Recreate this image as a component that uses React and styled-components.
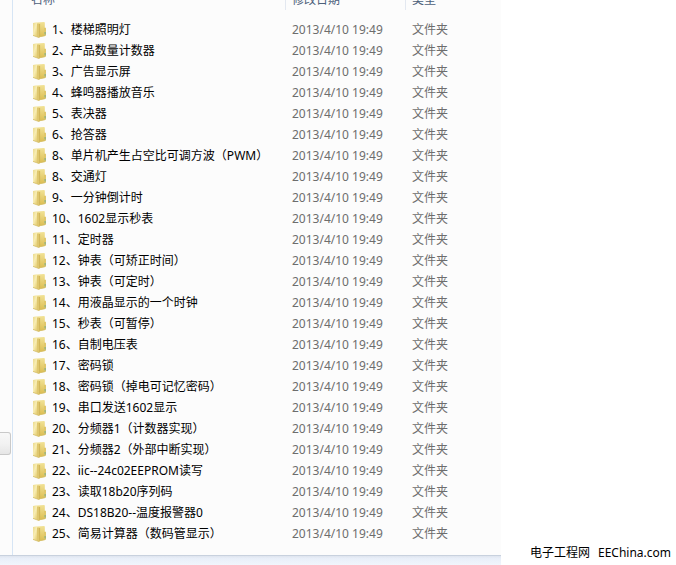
import React from "react";
import styled, { createGlobalStyle } from "styled-components";

const GlobalStyles = createGlobalStyle`
  body {
    margin: 0;
    background: #ffffff;
    font-family: "Noto Sans", "Noto Sans CJK SC", sans-serif;
    font-size: 12px;
    line-height: 21px;
    color: #000000;
  }
`;

const Page = styled.div`
  display: grid;
  grid-template-columns: minmax(0, 1fr) 175px;
  min-height: 100vh;
`;

const Explorer = styled.main`
  display: flex;
  flex-direction: column;
  background: #fcfcfc;
`;

const Panes = styled.div`
  display: flex;
  flex: 1;
`;

const NavPane = styled.div`
  display: flex;
  flex-direction: column;
  justify-content: flex-end;
  box-sizing: border-box;
  width: 13px;
  padding-bottom: 100px;
  border-right: 1px solid #d6e5f5;
`;

const ScrollThumb = styled.div`
  box-sizing: border-box;
  width: 11px;
  height: 23px;
  border: 1px solid #c9c9c9;
  border-left: none;
  border-radius: 0 3px 3px 0;
  background: linear-gradient(#f8f8f8, #f2f2f2 50%, #e6e6e6);
`;

const FilePane = styled.div`
  flex: 1;
  min-width: 0;
  padding-bottom: 11px;
`;

const Table = styled.table`
  width: 100%;
  table-layout: fixed;
  border-collapse: collapse;
`;

const Col = styled.col`
  width: ${(props) => props.$width};
`;

const HeadCell = styled.th`
  height: 19px;
  padding: 0;
  vertical-align: top;
  text-align: left;
  font-weight: normal;
  color: #4c607a;
`;

const HeadLabel = styled.div`
  display: flex;
  flex-direction: column;
  justify-content: flex-end;
  height: 10px;
  overflow: hidden;
  padding-left: ${(props) => (props.$first ? "17px" : "6px")};
  border-left: 1px solid ${(props) => (props.$first ? "transparent" : "#e3e8f0")};
`;

const Cell = styled.td`
  height: 21px;
  padding: 0 0 0 7px;
  white-space: nowrap;
  color: #6d6d6d;
`;

const NameCell = styled(Cell)`
  padding-left: 19px;
  color: #000000;
`;

const Name = styled.div`
  display: flex;
  align-items: center;
  gap: 5px;
`;

const StatusBar = styled.footer`
  box-sizing: border-box;
  height: 10px;
  border-top: 1px solid #c8d1de;
  background: linear-gradient(#dfe5ef, #e9eff9 30%, #f1f5fc);
`;

const Caption = styled.aside`
  display: flex;
  align-items: flex-end;
  gap: 8px;
  padding: 0 0 2px 29px;
  white-space: nowrap;
`;

const files = [
  "1、楼梯照明灯",
  "2、产品数量计数器",
  "3、广告显示屏",
  "4、蜂鸣器播放音乐",
  "5、表决器",
  "6、抢答器",
  "8、单片机产生占空比可调方波（PWM）",
  "8、交通灯",
  "9、一分钟倒计时",
  "10、1602显示秒表",
  "11、定时器",
  "12、钟表（可矫正时间）",
  "13、钟表（可定时）",
  "14、用液晶显示的一个时钟",
  "15、秒表（可暂停）",
  "16、自制电压表",
  "17、密码锁",
  "18、密码锁（掉电可记忆密码）",
  "19、串口发送1602显示",
  "20、分频器1（计数器实现）",
  "21、分频器2（外部中断实现）",
  "22、iic--24c02EEPROM读写",
  "23、读取18b20序列码",
  "24、DS18B20--温度报警器0",
  "25、简易计算器（数码管显示）",
];

const FolderIcon = () => (
  <svg width="15" height="18" viewBox="0 0 15 18" aria-hidden="true">
    <defs>
      <linearGradient id="cover" x1="0" y1="0" x2="1" y2="1">
        <stop offset="0" stopColor="#ead98a" />
        <stop offset="0.45" stopColor="#f8edb4" />
        <stop offset="1" stopColor="#e0c562" />
      </linearGradient>
      <linearGradient id="back" x1="0" y1="0" x2="0" y2="1">
        <stop offset="0" stopColor="#f1e296" />
        <stop offset="1" stopColor="#dcbd50" />
      </linearGradient>
    </defs>
    <path d="M5 1.4 12 1 12.8 1.6V15L7 16Z" fill="url(#back)" />
    <path d="M12 7 13.2 6.6 14 7.2V14.2L12 15.2Z" fill="#e0c76a" />
    <path d="M12.6 11H13.6V13.6H12.6Z" fill="#79ac84" />
    <path d="M1 2 4.8 1.2 5.6 2.2V15.8L1.6 14.8 1 14.2Z" fill="url(#cover)" />
    <path d="M5 2.4 8 3V15.8L7 16.8 5 15.8Z" fill="#dfc76e" />
    <path d="M7.6 3V15.8" stroke="#cdb052" strokeWidth="0.8" />
    <path d="M1 14.4 6.6 16.4 8.4 15.6 13.6 14.4" stroke="#d3bb62" strokeWidth="0.8" fill="none" />
  </svg>
);

const FileRow = ({ name }) => (
  <tr>
    <NameCell>
      <Name>
        <FolderIcon />
        {name}
      </Name>
    </NameCell>
    <Cell>2013/4/10 19:49</Cell>
    <Cell>文件夹</Cell>
  </tr>
);

const App = () => {
  return (
    <>
      <GlobalStyles />
      <Page>
        <Explorer>
          <Panes>
            <NavPane>
              <ScrollThumb />
            </NavPane>
            <FilePane>
              <Table>
                <colgroup>
                  <Col $width="272px" />
                  <Col $width="120px" />
                  <Col $width="auto" />
                </colgroup>
                <thead>
                  <tr>
                    <HeadCell scope="col">
                      <HeadLabel $first>名称</HeadLabel>
                    </HeadCell>
                    <HeadCell scope="col">
                      <HeadLabel>修改日期</HeadLabel>
                    </HeadCell>
                    <HeadCell scope="col">
                      <HeadLabel>类型</HeadLabel>
                    </HeadCell>
                  </tr>
                </thead>
                <tbody>
                  {files.map((name) => (
                    <FileRow key={name} name={name} />
                  ))}
                </tbody>
              </Table>
            </FilePane>
          </Panes>
          <StatusBar />
        </Explorer>
        <Caption>
          <span>电子工程网</span>
          <span>EEChina.com</span>
        </Caption>
      </Page>
    </>
  );
};

export default App;
